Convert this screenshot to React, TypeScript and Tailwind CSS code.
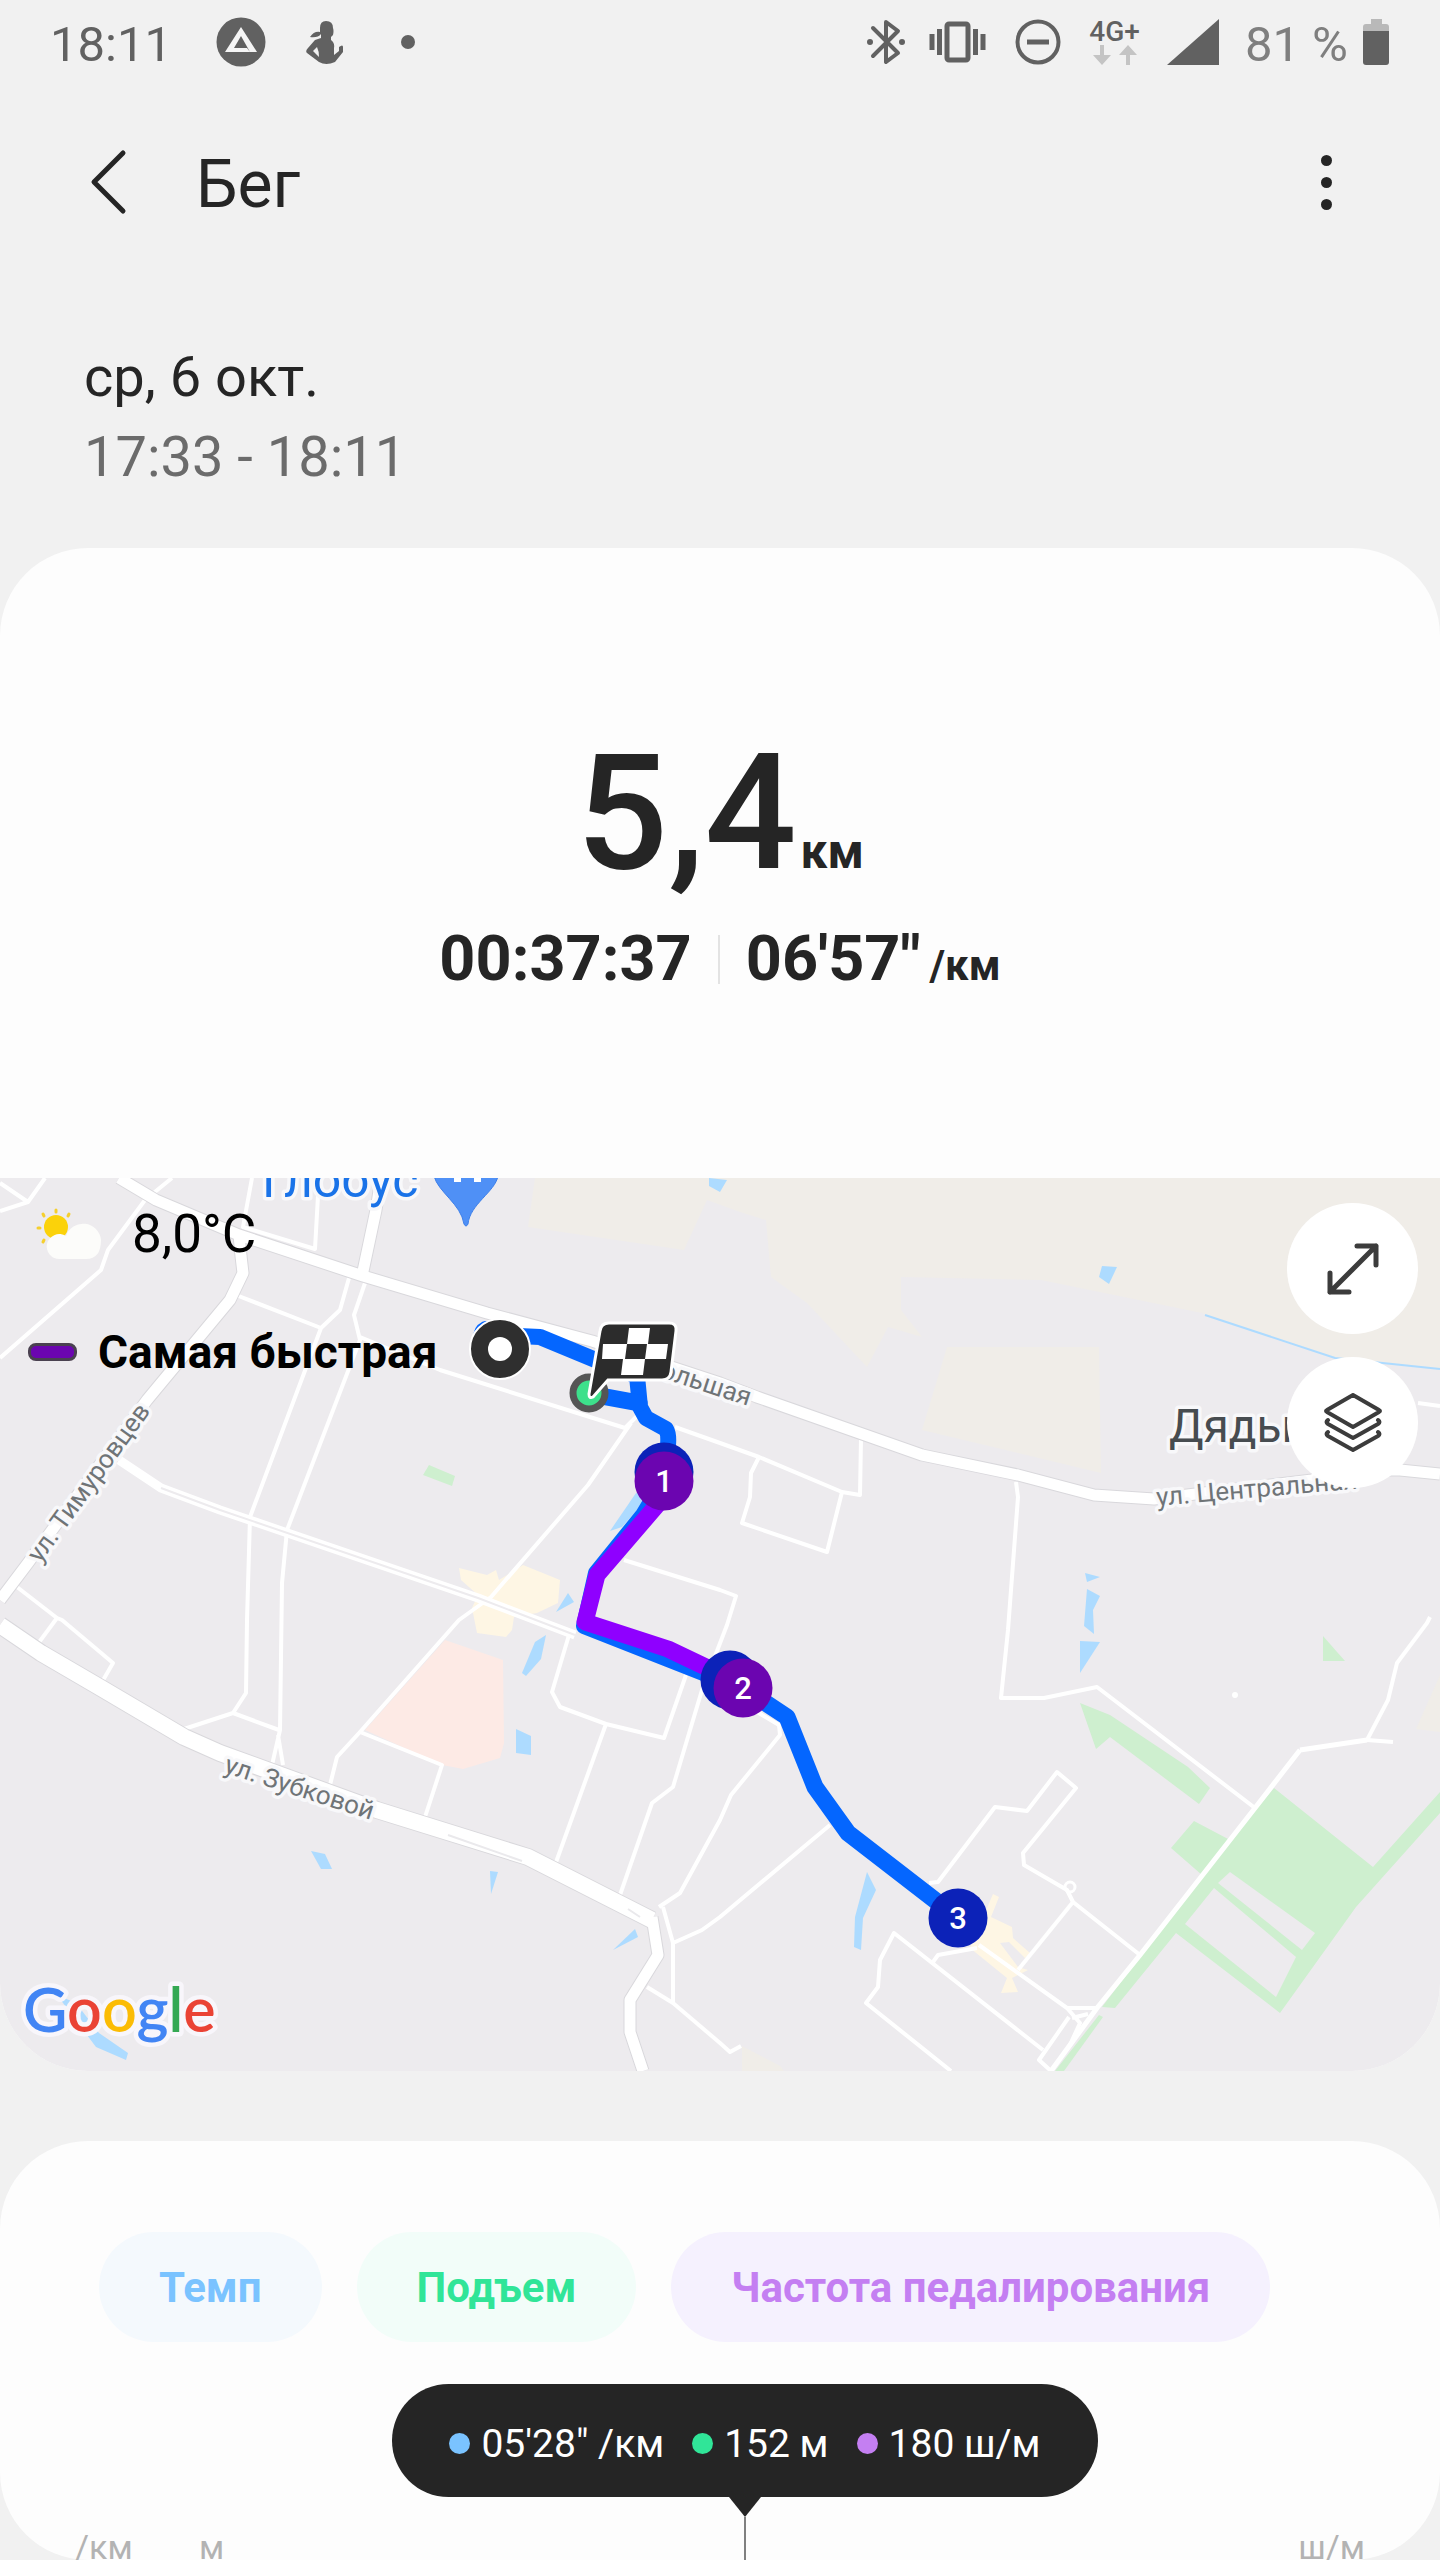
import type { ReactNode } from 'react'

interface Metric {
    label: string;
    value: string;
    chip: string;
    dot: string;
}

const metrics: Metric[] = [
    { label: 'Темп', value: `05'28" /км`, chip: 'bg-[#f4f9fd] text-[#7ac3ff]', dot: 'bg-[#7ac3ff]' },
    { label: 'Подъем', value: '152 м', chip: 'bg-[#f2fdf9] text-[#30e598]', dot: 'bg-[#30e598]' },
    { label: 'Частота педалирования', value: '180 ш/м', chip: 'bg-[#f5f1fe] text-[#c47ff2]', dot: 'bg-[#c47ff2]' }
]

const mainRoads = [
    'M119 1178L156 1200L239 1235L363 1276L487 1313L592 1341L720 1383L757 1397L922 1455L1018 1475L1094 1495L1154 1499L1312 1480L1340 1470L1400 1470L1440 1474',
    'M239 1235L241 1256L243 1273L230 1300L147 1400L28 1563L0 1600',
    'M381 1178L376 1210L362 1276',
    'M652 1917L658 1955L630 2000L630 2032L643 2071'
]

const streets = [
    'M0 1183L28 1202L45 1178M28 1202L0 1211',
    'M172 1178L145 1200L108 1250L101 1270L0 1358',
    'M252 1178L243 1227L315 1249L319 1178',
    'M236 1295L321 1328',
    'M349 1278L340 1310L321 1328L250 1517L247 1620L246 1693L233 1713L181 1730M233 1713L279 1730',
    'M365 1283L354 1315L360 1340L287 1530L282 1583L280 1730L272 1765M278 1735L283 1765',
    'M360 1337L440 1370L625 1428L637 1416M675 1427L720 1443L759 1457L842 1492L860 1495L861 1438',
    'M759 1457L751 1473L750 1497L742 1523L827 1552L842 1492',
    'M631 1423L588 1485L491 1597L459 1620L360 1732L337 1757L330 1785',
    'M360 1732L442 1765L425 1817',
    'M624 1560L720 1590L736 1596L727 1625L702 1690L673 1787L652 1803L620 1895',
    'M569 1635L552 1692L560 1707L606 1724L664 1738L686 1675M606 1724L555 1865',
    'M17 1587L57 1618L62 1620L113 1663L102 1682M57 1618L37 1645',
    'M659 1907L680 1893L720 1820L731 1795L780 1735L779 1725L757 1712',
    'M663 1907L673 1943L673 2003M673 1943L702 1930L720 1917L830 1825',
    'M647 1987L673 2003L720 2043L730 2052L741 2046',
    'M1016 1482L1018 1497L1008 1630L1001 1698L1044 1698L1097 1687L1255 1808',
    'M1393 1742L1367 1740L1388 1700L1397 1663L1427 1623L1430 1617',
    'M929 1883L938 1882L995 1807L1027 1811L1057 1772L1076 1788L1023 1853L1024 1865L1067 1890L1073 1902L1140 1955',
    'M1073 1902L1018 1970',
    'M977 1948L938 1955L933 1962M951 2071L866 2003L878 1987L880 1960L894 1933L1043 2050',
    'M979 1945L1067 2008L1097 2008M1069 2017L1039 2060L1051 2071M1067 2008L1080 2023L1069 2047M1072 2018L1088 2014',
    'M1418 1403L1440 1406'
]

const water = [
    '709,1178 727,1180 720,1192 709,1186',
    '1102,1266 1117,1267 1109,1284 1099,1277',
    '1085,1573 1100,1577 1087,1582',
    '1087,1589 1100,1596 1093,1610 1094,1634 1084,1626',
    '1080,1641 1100,1642 1080,1673',
    '636,1493 610,1531 622,1527 650,1495',
    '568,1593 574,1602 556,1612',
    '546,1635 535,1642 522,1673 526,1676 541,1659',
    '516,1729 531,1736 531,1755 516,1753',
    '311,1851 325,1854 332,1869 321,1869',
    '490,1871 498,1872 491,1894',
    '635,1929 638,1937 613,1950',
    '57,1995 76,2003 99,2033 128,2053 126,2060 96,2047',
    '867,1872 876,1890 863,1918 861,1950 854,1947 855,1917'
]

const parks = [
    '429,1465 455,1476 452,1486 423,1475',
    '1323,1636 1345,1661 1323,1661',
    '1080,1703 1110,1715 1188,1767 1210,1788 1199,1804 1110,1737 1096,1749',
    '1274,1788 1373,1867 1440,1792 1440,1813 1356,1907 1280,2013 1176,1933 1115,2008 1102,2007 1202,1875 1171,1848 1194,1821 1230,1840',
    '1099,2015 1103,2017 1064,2071 1055,2071'
]

const Marker = ({ x, y, fill, children }: { x: number; y: number; fill: string; children?: ReactNode }) => (
    <g>
        <circle cx={x} cy={y} r="29.5" fill={fill} />
        <text x={x} y={y + 11} fill="#fff" fontSize="31" fontWeight="500" textAnchor="middle">{children}</text>
    </g>
)

const RouteMap = () => (
    <svg
        className="absolute inset-0 h-full w-full font-['Roboto',sans-serif]"
        viewBox="0 1178 1440 893"
        preserveAspectRatio="xMidYMid slice"
        role="img"
        aria-label="Карта маршрута"
    >
        <rect x="0" y="1178" width="1440" height="893" fill="#edebee" />
        <g fill="#f0ede8">
            <polygon points="535,1178 528,1227 684,1250 707,1200 740,1212 766,1220 771,1277 807,1303 867,1367 888,1327 922,1337 901,1310 901,1277 1041,1280 1202,1313 1335,1357 1440,1368 1440,1178" />
            <polygon points="947,1347 1099,1347 1101,1473 922,1430" />
            <polygon points="1440,1675 1416,1729 1440,1732" />
            <polygon points="742,2046 780,2066 784,2071 742,2071" />
        </g>
        <polygon fill="#fdeae5" points="445,1640 503,1660 504,1743 500,1758 463,1769 442,1765 365,1730" />
        <g fill="#fef6e4">
            <polygon points="459,1568 487,1575 496,1570 499,1580 523,1565 560,1580 558,1603 537,1613 514,1617 512,1630 506,1637 477,1633 472,1608 478,1595 461,1580" />
            <polygon points="993,1894 999,1897 991,1917 1012,1927 1013,1938 1030,1953 1025,1958 1009,1942 1000,1943 1018,1967 1028,1970 1012,1978 1018,1992 1001,1993 1007,1978 970,1948" />
        </g>
        <g fill="#ceefcf">
            {parks.map(points => <polygon key={points} points={points} />)}
        </g>
        <g fill="#edebee">
            <polygon points="1230,1872 1315,1933 1302,1950 1218,1883" />
            <polygon points="1214,1888 1296,1957 1276,1997 1185,1924" />
        </g>
        <g fill="#addbff">
            {water.map(points => <polygon key={points} points={points} />)}
        </g>
        <path d="M1205 1315L1335 1358L1440 1369" fill="none" stroke="#addbff" strokeWidth="2" />

        <g fill="none" strokeLinejoin="round">
            {streets.map(d => <path key={d} d={d} stroke="#fff" strokeWidth="4" />)}
            <circle cx="1070" cy="1887" r="5" stroke="#fff" strokeWidth="3" />
            <path d="M119 1460L161 1488L220 1510L478 1598L575 1635" stroke="#fff" strokeWidth="9" />
            <path d="M161 1488L220 1510L478 1598L575 1635" stroke="#edebee" strokeWidth="2" />
            <path d="M1300 1750L1255 1808L1140 1955L1097 2008L1051 2071M1367 1740L1300 1750" stroke="#fff" strokeWidth="5" />
            {mainRoads.map(d => <path key={d} d={d} stroke="#d9d8dc" strokeWidth="13" />)}
            <path d="M0 1625L41 1653L101 1688L184 1737L220 1753L377 1810L528 1857L652 1920" stroke="#d9d8dc" strokeWidth="18" />
            {mainRoads.map(d => <path key={d} d={d} stroke="#fff" strokeWidth="11" />)}
            <path d="M0 1625L41 1653L101 1688L184 1737L220 1753L377 1810L528 1857L652 1920" stroke="#fff" strokeWidth="16" />
            <path d="M448 1835L522 1861M628 1909L640 1917" stroke="#eae9ec" strokeWidth="2" />
        </g>
        <circle cx="1235" cy="1695" r="3" fill="#fff" />

        <g fill="#6f7477" stroke="#f8f8fa" strokeWidth="7" strokeLinejoin="round" paintOrder="stroke" fontSize="26">
            <text transform="translate(40 1564) rotate(-54)">ул. Тимуровцев</text>
            <text transform="translate(748 1406) rotate(18)" textAnchor="end">Большая</text>
            <text transform="translate(223 1772) rotate(18)">ул. Зубковой</text>
            <text transform="translate(1157 1506) rotate(-5)">ул. Центральная</text>
            <text x="1169" y="1442" fontSize="46" fill="#474c50">Дядьково</text>
            <text x="262" y="1197" fontSize="50" fill="#1a73e8">Глобус</text>
        </g>
        <path d="M434 1176H498C495 1192 470 1204 468 1224Q466 1228 464 1224C461 1204 438 1192 434 1176Z" fill="#4f90f6" stroke="#3c7fea" strokeWidth="1" />
        <path d="M454 1176h7v6h-7zM474 1176h7v6h-7z" fill="#fff" />

        <g fill="none" strokeLinejoin="round" strokeLinecap="round">
            <path d="M486 1329Q480 1332 481 1342M500 1335L540 1337L598 1361L637 1376L640 1407L646 1418L666 1429Q669 1434 668 1445L664 1480L643 1515L596 1573L584 1626L706 1674L743 1688" stroke="#0466ff" strokeWidth="16" />
            <path d="M743 1688L787 1717L815 1787L848 1833L958 1918M590 1394L639 1403" stroke="#0466ff" strokeWidth="17" />
            <path d="M664 1497L597 1575L585 1622L668 1649L712 1670L743 1688" stroke="#8f00ff" strokeWidth="17" />
        </g>
        <Marker x={664} y={1472} fill="#0c22b8" />
        <Marker x={664} y={1481} fill="#6b05b0">1</Marker>
        <Marker x={730} y={1680} fill="#0c22b8" />
        <Marker x={743} y={1688} fill="#6b05b0">2</Marker>
        <Marker x={958} y={1918} fill="#0c22b8">3</Marker>

        <circle cx="500" cy="1349" r="30" fill="#2f2f2f" stroke="#fff" strokeWidth="2" />
        <circle cx="500" cy="1349" r="12" fill="#fff" />
        <circle cx="589" cy="1393" r="16" fill="#3de08b" stroke="#555" strokeWidth="7" />
        <path
            d="M609 1323H669Q677 1323 676 1331L671 1372Q670 1380 662 1380H608L593 1397Q589 1399 589 1394L600 1331Q601 1323 609 1323Z"
            fill="#2c2c2c"
            stroke="#fff"
            strokeWidth="3"
        />
        <path d="M629 1328h21l-2 16h-21zM603 1344h24l-2 15h-23zM647 1344h21l-2 15h-21zM623 1359h22l-2 16h-22z" fill="#fff" />
    </svg>
)

const StatusBar = () => (
    <header className="flex h-[84px] items-center justify-between pr-[51px] pl-[50px] text-[49px] leading-[48px] text-[#616161]">
        <div className="flex items-center">
            <span className="pt-1.5">18:11</span>
            <svg className="ml-[44px] size-[50px]" viewBox="0 0 50 50">
                <circle cx="25" cy="25" r="24.5" fill="#616161" />
                <path fillRule="evenodd" d="M25 10L41 35H34L25 19L18 31H31L34 35H9Z" fill="#f5f5f5" />
            </svg>
            <svg className="ml-[40px] h-[44px] w-[38px]" viewBox="0 0 38 44" fill="#616161">
                <path d="M14 8Q14 1 20 1Q27 1 27 8Q28 11 27 15L25 17V20Q29 23 28 28V35L33 31V27Q37 24 37 27V32L29 42Q20 46 13 42L1 33Q-1 31 2 28L9 20Q12 19 15 18V14Q12 18 4 17Q8 11 14 12ZM11 27L7 31L13 37Q13 31 11 27Z" fillRule="evenodd" />
            </svg>
            <span className="ml-[57px] size-[14px] rounded-full bg-[#616161]" />
        </div>
        <div className="flex items-center">
            <svg className="h-[46px] w-[38px]" viewBox="0 0 38 46" fill="none" stroke="#616161" strokeWidth="4">
                <path d="M6 9L31 34L19 43V3L31 12L6 37" strokeLinejoin="round" strokeLinecap="round" />
                <circle cx="3" cy="23" r="3" fill="#616161" stroke="none" />
                <circle cx="35" cy="23" r="3" fill="#616161" stroke="none" />
            </svg>
            <svg className="ml-[24px] h-[42px] w-[57px]" viewBox="0 0 57 42" fill="none" stroke="#616161" strokeWidth="5">
                <rect x="18" y="3" width="21" height="36" rx="2" />
                <path d="M10.500 8V34M46.500 8V34M3 13V29M54 13V29" />
            </svg>
            <svg className="ml-[29px] size-[46px]" viewBox="0 0 46 46" fill="none" stroke="#616161" strokeWidth="4">
                <circle cx="23" cy="23" r="20.500" />
                <path d="M12 23H34" strokeWidth="5" />
            </svg>
            <div className="ml-[28px] flex flex-col items-center">
                <span className="text-[28px] leading-[26px] font-medium">4G+</span>
                <svg className="h-[20px] w-[46px]" viewBox="0 0 46 20" fill="#c4c4c4">
                    <path d="M8 0H12V10H19L10 20L1 10H8ZM34 20H38V10H45L36 0L27 10H34Z" />
                </svg>
            </div>
            <svg className="ml-[27px] h-[46px] w-[52px]" viewBox="0 0 52 46">
                <path d="M52 0V46H0Z" fill="#616161" />
            </svg>
            <span className="ml-[26px] pt-1.5 text-[#7f7f7f]">81 %</span>
            <svg className="ml-[15px] h-[46px] w-[26px]" viewBox="0 0 26 46">
                <path d="M8 0H19V5H23Q26 5 26 8V13H0V8Q0 5 3 5H8Z" fill="#b9b9b9" />
                <path d="M0 12H26V43Q26 46 23 46H3Q0 46 0 43Z" fill="#616161" />
            </svg>
        </div>
    </header>
)

const WeatherIcon = () => (
    <svg className="h-[52px] w-[66px]" viewBox="0 0 66 52">
        <g stroke="#f5cf2e" strokeWidth="3" strokeLinecap="round">
            <path d="M20 2V4M7 6L8 8M33 6L32 8M2 20H4M7 34L8 32" />
        </g>
        <circle cx="20" cy="19" r="12" fill="#fbd20a" />
        <path d="M24 51A12.500 12.500 0 1 1 30 28A18 18 0 0 1 65 32Q65 51 50 51Z" fill="#fcfcfa" />
    </svg>
)

const App = () => {
    return (
        <div className="min-h-screen bg-[#f1f1f1] font-['Roboto',sans-serif] text-[#252525]">
            <StatusBar />

            <div className="flex h-[196px] items-center pr-[99px] pl-[88px]">
                <button type="button" aria-label="Назад" className="mr-[68px]">
                    <svg className="h-[66px] w-[40px]" viewBox="0 0 40 66" fill="none" stroke="#252525" strokeWidth="5" strokeLinecap="round" strokeLinejoin="round">
                        <path d="M35 4L6 33L35 62" />
                    </svg>
                </button>
                <h1 className="grow pt-1.5 text-[66px] leading-[72px]">Бег</h1>
                <button type="button" aria-label="Ещё" className="flex w-[30px] flex-col items-center gap-[11px]">
                    <span className="size-[11px] rounded-full bg-[#252525]" />
                    <span className="size-[11px] rounded-full bg-[#252525]" />
                    <span className="size-[11px] rounded-full bg-[#252525]" />
                </button>
            </div>

            <div className="px-[84px] pt-[57px] pb-[51px] text-[56px] leading-[80px]">
                <p>ср, 6 окт.</p>
                <p className="text-[#6b6b6b]">17:33 - 18:11</p>
            </div>

            <main>
                <section className="overflow-hidden rounded-[88px] bg-[#fdfdfd]">
                    <div className="flex flex-col items-center gap-[28px] pt-[183px] pb-[183px] font-bold">
                        <div className="flex items-baseline gap-[4px]">
                            <span className="text-[162px] leading-[164px] font-medium">5,4</span>
                            <span className="text-[48px] leading-none">км</span>
                        </div>
                        <div className="flex items-center text-[63px] leading-[72px]">
                            <span>00:37:37</span>
                            <span className="mx-[26px] h-[49px] w-[2px] bg-[#e3e3e3]" />
                            <span className="flex items-baseline gap-[9px]">
                                06'57"
                                <span className="text-[42px] leading-none">/км</span>
                            </span>
                        </div>
                    </div>

                    <div className="relative flex min-h-[893px] flex-col justify-between">
                        <RouteMap />
                        <div className="relative flex items-start justify-between pr-[22px]">
                            <div className="pt-[26px] text-black">
                                <div className="flex h-[60px] items-center gap-[30px] pl-[36px] text-[53px] leading-[60px]">
                                    <WeatherIcon />
                                    <span>8,0°C</span>
                                </div>
                                <div className="mt-[61px] flex h-[54px] items-center gap-[21px] pl-[28px] text-[46px] leading-[54px] font-bold">
                                    <span className="h-[18px] w-[49px] rounded-[8px] border-3 border-[#4a4150] bg-[#6b05b0]" />
                                    <span>Самая быстрая</span>
                                </div>
                            </div>
                            <div className="flex flex-col gap-[23px] pt-[25px]">
                                <button type="button" aria-label="Развернуть карту" className="flex size-[131px] items-center justify-center rounded-full bg-white">
                                    <svg className="size-[54px]" viewBox="0 0 54 54" fill="none" stroke="#3c3c3c" strokeWidth="5" strokeLinecap="round" strokeLinejoin="round">
                                        <path d="M4 50L50 4M31 4H50V23M4 31V50H23" />
                                    </svg>
                                </button>
                                <button type="button" aria-label="Слои карты" className="flex size-[131px] items-center justify-center rounded-full bg-white">
                                    <svg className="size-[60px]" viewBox="0 2 60 60" fill="none" stroke="#3c3c3c" strokeWidth="4" strokeLinecap="round" strokeLinejoin="round">
                                        <path d="M30 4L56 19Q58 20 56 21L30 36L4 21Q2 20 4 19ZM5 29Q2 31 5 33L30 47L55 33Q58 31 55 29M5 41Q2 43 5 45L30 59L55 45Q58 43 55 41" />
                                    </svg>
                                </button>
                            </div>
                        </div>
                        <div className="relative px-[16px] pb-[16px]">
                            <svg className="h-[80px] w-[220px] overflow-visible" viewBox="0 0 220 80">
                                <text x="7" y="57" fontSize="61" fontFamily="Lato, sans-serif" fontWeight="600" stroke="#f8f6fb" strokeWidth="9" strokeLinejoin="round" paintOrder="stroke">
                                    <tspan fill="#4285f4">G</tspan>
                                    <tspan fill="#ea4335">o</tspan>
                                    <tspan fill="#fbbc05">o</tspan>
                                    <tspan fill="#4285f4">g</tspan>
                                    <tspan fill="#34a853">l</tspan>
                                    <tspan fill="#ea4335">e</tspan>
                                </text>
                            </svg>
                        </div>
                    </div>
                </section>

                <section className="mt-[70px] rounded-[88px] bg-[#fdfdfd] pt-[91px]">
                    <div className="flex flex-wrap gap-[35px] px-[99px]">
                        {metrics.map(metric => (
                            <button key={metric.label} type="button" className={`h-[110px] rounded-full px-[60px] pt-0.5 text-[42px] leading-[48px] font-bold ${metric.chip}`}>
                                {metric.label}
                            </button>
                        ))}
                    </div>

                    <div className="mt-[42px] flex justify-center pl-[50px]">
                        <div className="flex h-[113px] items-center gap-[28px] rounded-full bg-[#252525] px-[57px] pt-1.5 text-[39px] leading-[48px] text-white">
                            {metrics.map(metric => (
                                <span key={metric.label} className="flex items-center gap-[11px] whitespace-nowrap">
                                    <span className={`size-[21px] rounded-full ${metric.dot}`} />
                                    {metric.value}
                                </span>
                            ))}
                        </div>
                    </div>

                    <div className="grid">
                        <div className="col-start-1 row-start-1 flex flex-col items-center pl-[50px]">
                            <svg className="h-[20px] w-[32px]" viewBox="0 0 32 20">
                                <path d="M0 0H32L16 20Z" fill="#252525" />
                            </svg>
                            <span className="h-[43px] w-[2px] bg-[#808080]" />
                        </div>
                        <div className="col-start-1 row-start-1 flex self-end px-[75px] text-[34px] leading-[26px] text-[#b3b3b3]">
                            <span className="w-[124px]">/км</span>
                            <span className="grow">м</span>
                            <span>ш/м</span>
                        </div>
                    </div>
                </section>
            </main>
        </div>
    )
}

export default App
